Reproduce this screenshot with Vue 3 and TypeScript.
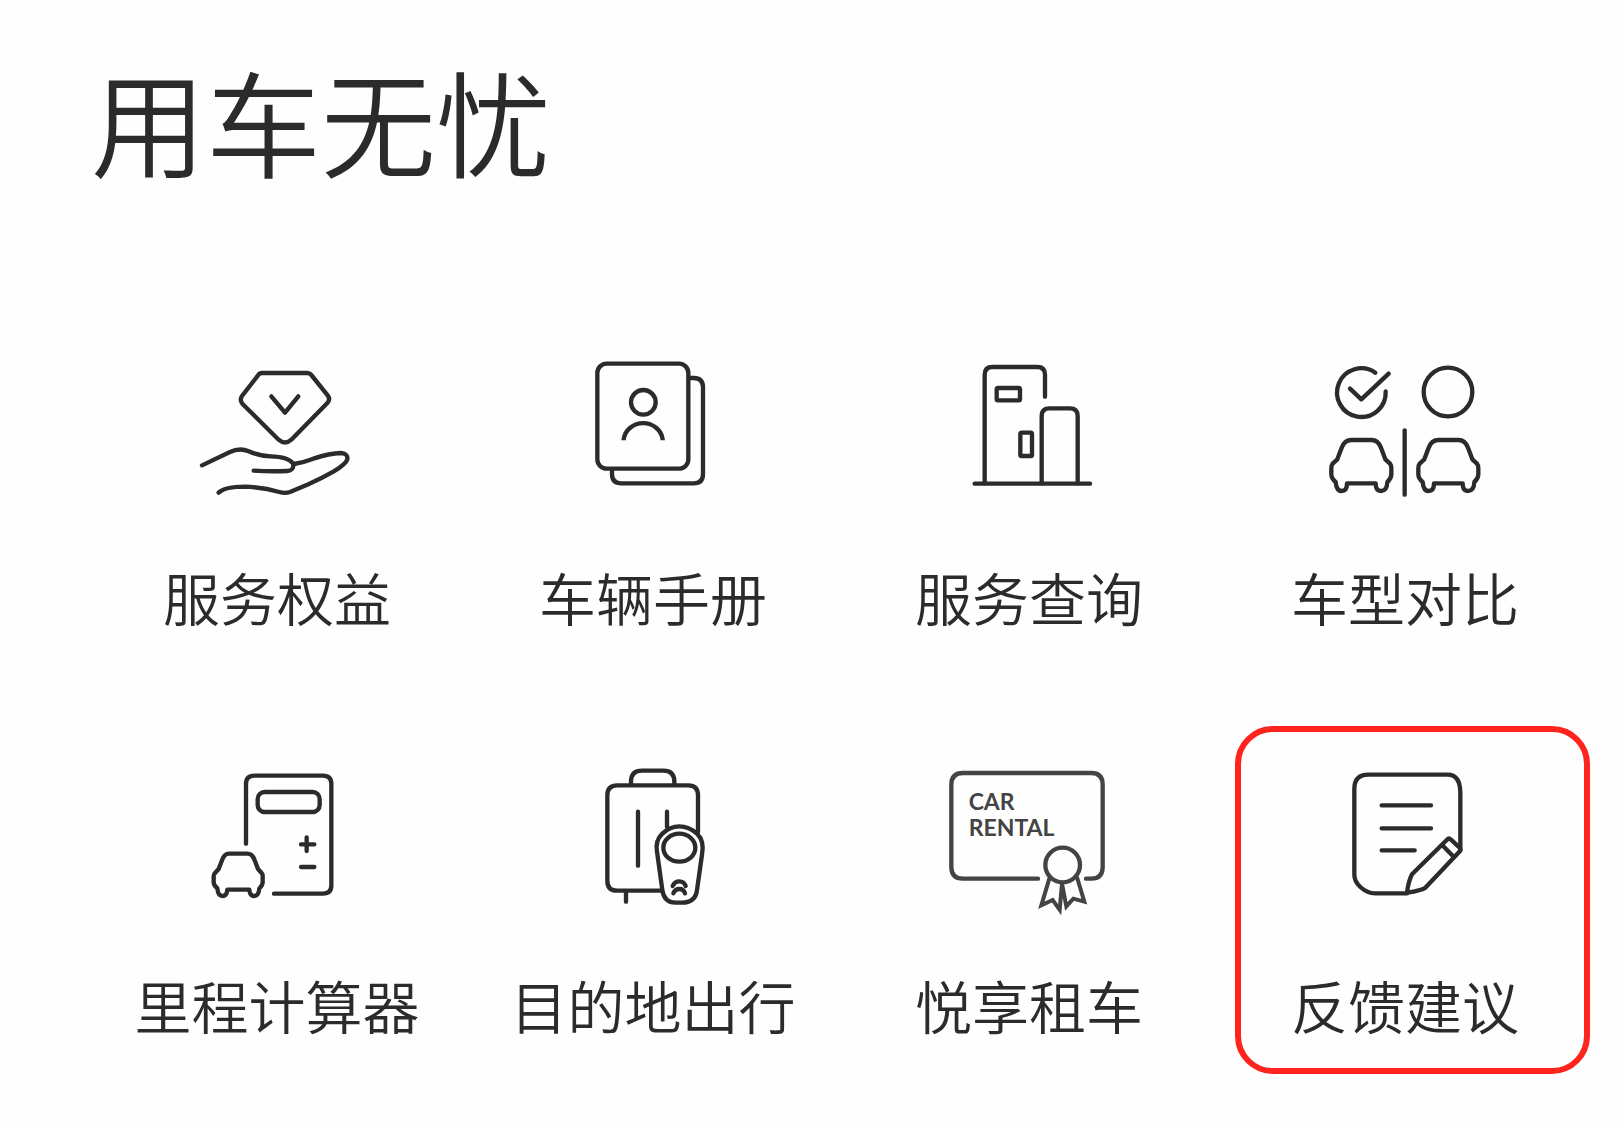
<script setup lang="ts">
type IconName =
  | 'benefits'
  | 'manual'
  | 'lookup'
  | 'compare'
  | 'calculator'
  | 'travel'
  | 'rental'
  | 'feedback'

interface ServiceEntry {
  icon: IconName
  label: string
  viewBox: string
  highlighted?: boolean
}

const services: ServiceEntry[] = [
  { icon: 'benefits', label: '服务权益', viewBox: '-9 0 600 480' },
  { icon: 'manual', label: '车辆手册', viewBox: '-51 0 600 480' },
  { icon: 'lookup', label: '服务查询', viewBox: '-63 0 600 480' },
  { icon: 'compare', label: '车型对比', viewBox: '-15 0 600 480' },
  { icon: 'calculator', label: '里程计算器', viewBox: '-39 -6 600 480' },
  { icon: 'travel', label: '目的地出行', viewBox: '-81 9 600 480' },
  { icon: 'rental', label: '悦享租车', viewBox: '-3 9 600 480' },
  { icon: 'feedback', label: '反馈建议', viewBox: '255 129 600 480', highlighted: true },
]
</script>

<template>
  <main class="page">
    <h1 class="title">用车无忧</h1>
    <nav class="services" aria-label="用车无忧">
      <a
        v-for="item in services"
        :key="item.icon"
        class="service"
        :class="{ highlighted: item.highlighted }"
        href="#"
      >
        <svg class="icon" :viewBox="item.viewBox" aria-hidden="true">
          <!-- Diamond held over an open hand -->
          <g v-if="item.icon === 'benefits'">
            <path d="M246 69H382Q389 69 394 75L443 136Q452 148 442 159L334 269Q315 286 296 269L187 161Q178 150 186 138L234 76Q239 69 246 69Z" />
            <path d="M274 139L315 188L355 139" />
            <path d="M66 346L150 306Q180 292 206 304Q238 318 272 319Q325 320 340 341Q342 362 322 363Q270 365 221 362" />
            <path d="M342 342Q368 338 400 326Q450 310 482 309Q504 310 502 328Q498 342 460 365Q425 385 385 403L330 426Q315 431 298 426Q250 412 195 410Q135 410 116 428" />
          </g>

          <!-- Two stacked cards with a portrait -->
          <g v-else-if="item.icon === 'manual'" class="flat">
            <rect x="82" y="41" width="273" height="315" rx="28" />
            <path d="M360 84H371Q399 84 399 112V372Q399 400 371 400H154Q126 400 126 372V360" />
            <circle cx="220" cy="157" r="37" />
            <path d="M161 271V268A59 56 0 0 1 278 268V271" />
          </g>

          <!-- Buildings -->
          <g v-else-if="item.icon === 'lookup'">
            <path d="M104 400V74Q104 51 127 51H262Q285 51 285 74V140" />
            <path d="M275 400V198Q275 175 298 175H360Q383 175 383 198V400" />
            <path d="M74 401H420" />
            <rect x="140" y="114" width="70" height="37" rx="4" />
            <rect x="211" y="248" width="35" height="70" rx="4" />
          </g>

          <!-- Two cars with a selected mark -->
          <g v-else-if="item.icon === 'compare'">
            <path d="M196 68A73 73 0 1 0 227 124" />
            <path d="M120 116L154 148L236 71" />
            <circle cx="414" cy="126" r="73" />
            <path d="M284 241V434" />
            <path d="M124 270H185Q204 270 213 293L226 328L240 341Q244 346 244 355V373Q244 386 232 396Q231 423 213 423Q197 423 197 400H111Q111 423 95 423Q79 423 77 396Q64 386 64 373V355Q64 346 68 341L82 328L95 293Q104 270 124 270Z" />
            <path d="M385 270H446Q465 270 474 293L487 328L501 341Q505 346 505 355V373Q505 386 493 396Q492 423 474 423Q458 423 458 400H372Q372 423 356 423Q340 423 338 396Q325 386 325 373V355Q325 346 329 341L343 328L356 293Q365 270 385 270Z" />
          </g>

          <!-- Calculator with a car -->
          <g v-else-if="item.icon === 'calculator'">
            <path d="M168 251V72Q168 47 193 47H399Q424 47 424 72V376Q424 401 399 401H252" />
            <rect x="203" y="96" width="186" height="60" rx="21" />
            <path d="M333 253H373M350 232V273M333 321H373" />
            <path d="M117 281H172Q187 281 194 301L204 327L215 339Q218 342 218 349V367Q218 377 208 385Q206 408 192 408Q180 408 178 389H112Q110 408 98 408Q84 408 82 385Q71 377 71 367V349Q71 342 75 339L86 327L96 301Q103 281 117 281Z" />
          </g>

          <!-- Suitcase with a car key -->
          <g v-else-if="item.icon === 'travel'">
            <path d="M243 407H112Q82 407 82 377V121Q82 91 112 91H325Q354 91 354 121V231" />
            <path d="M153 89V80Q153 47 186 47H250Q283 47 283 80V89" />
            <path d="M174 170V332M261 170V216M138 411V440" />
            <path d="M298 214Q327 214 351 236Q374 258 366 299L351 405Q347 443 305 443H287Q252 443 247 405L231 290Q225 257 247 236Q270 214 298 214Z" />
            <ellipse cx="298" cy="278" rx="48" ry="42" />
            <path d="M278 393Q284 379 298 379Q312 379 317 393M280 415Q285 402 298 402Q311 402 315 415" />
          </g>

          <!-- Rental certificate with a rosette -->
          <g v-else-if="item.icon === 'rental'" class="muted">
            <path d="M324 371H99Q64 371 64 336V89Q64 54 99 54H484Q518 54 518 89V336Q518 371 484 371H468" />
            <circle cx="398" cy="330" r="52" />
            <path class="ribbon" d="M358 371L334 451L368 435L389 464L396 386L409 454L430 431L463 440L442 370" />
            <text class="caption" x="116" y="164">CAR</text>
            <text class="caption" x="116" y="243">RENTAL</text>
          </g>

          <!-- Note with a pencil -->
          <g v-else>
            <path d="M561 535H465Q442 535 421 516Q403 499 403 479V222Q403 179 445 179H683Q721 179 721 235V407" />
            <path d="M485 271H633M485 340H633M485 406H584" />
            <path d="M561 533Q565 500 576 478L681 374Q687 368 693 374L718 397Q724 403 718 410L616 518Q605 526 561 533Z" />
            <path d="M667 391L701 425" />
          </g>
        </svg>
        <span class="label">{{ item.label }}</span>
      </a>
    </nav>
  </main>
</template>

<style>
body {
  margin: 0;
  background: #fefefe;
}
</style>

<style scoped>
.page {
  padding: 62px 31px 88px 89px;
  color: #2b2b2b;
  font-family: 'Noto Sans CJK SC', 'Noto Sans', sans-serif;
}

.title {
  margin: 0 0 173px 2px;
  font-size: 115px;
  font-weight: 350;
  line-height: 115px;
}

.services {
  display: grid;
  grid-template-columns: repeat(4, 1fr);
  row-gap: 133px;
}

.service {
  position: relative;
  display: flex;
  flex-direction: column;
  align-items: center;
  gap: 58px;
  color: inherit;
  text-decoration: none;
}

.highlighted::after {
  content: '';
  position: absolute;
  inset: -32px 3px -41px 18px;
  border: 6px solid #ff241e;
  border-radius: 38px;
}

.icon {
  width: 200px;
  height: 160px;
  fill: none;
  stroke: #2b2b2b;
  stroke-width: 13;
  stroke-linecap: round;
  stroke-linejoin: round;
}

.flat {
  stroke-linecap: butt;
}

.muted {
  stroke: #444;
}

.ribbon {
  stroke-width: 12;
  stroke-linejoin: miter;
}

.caption {
  fill: #444;
  stroke: none;
  font-family: Lato, sans-serif;
  font-size: 69px;
  font-weight: 700;
}

.label {
  font-size: 57px;
  font-weight: 350;
  line-height: 57px;
  white-space: nowrap;
}
</style>
